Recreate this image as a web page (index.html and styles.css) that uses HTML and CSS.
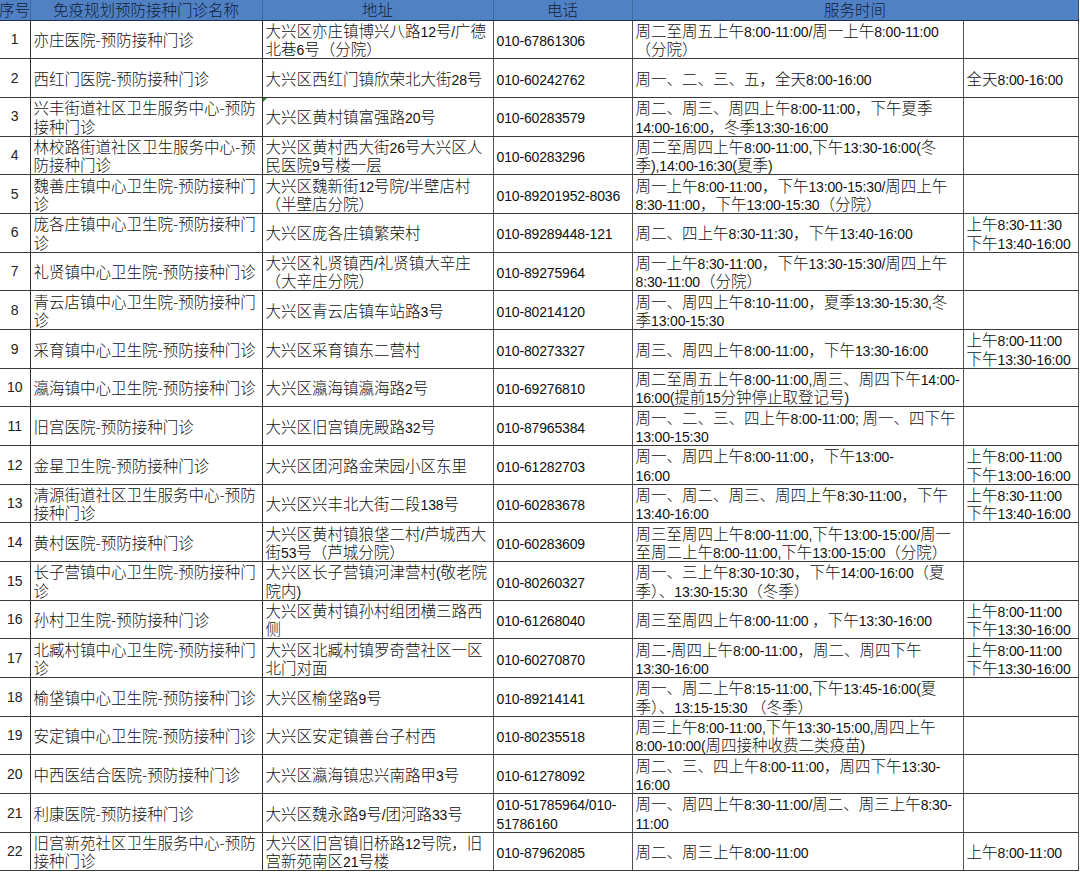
FILE: index.html
```html
<!DOCTYPE html>
<html lang="zh-CN">
<head>
<meta charset="utf-8">
<title>免疫规划预防接种门诊</title>
<link rel="stylesheet" href="styles.css">
</head>
<body>
<table class="sheet">
  <colgroup>
    <col class="c-no"><col class="c-name"><col class="c-addr"><col class="c-tel"><col class="c-time"><col class="c-extra">
  </colgroup>
  <thead>
    <tr class="head">
      <th class="h-no">序号</th>
      <th>免疫规划预防接种门诊名称</th>
      <th>地址</th>
      <th>电话</th>
      <th colspan="2">服务时间</th>
    </tr>
  </thead>
  <tbody>
    <tr><td class="no">1</td><td>亦庄医院-预防接种门诊</td><td>大兴区亦庄镇博兴八路<span class="n">12</span>号<span class="n">/</span>广德<br>北巷<span class="n">6</span>号（分院）</td><td><span class="n">010-67861306</span></td><td>周二至周五上午<span class="n">8:00-11:00/</span>周一上午<span class="n">8:00-11:00</span><br>（分院）</td><td></td></tr>
    <tr><td class="no">2</td><td>西红门医院-预防接种门诊</td><td>大兴区西红门镇欣荣北大街<span class="n">28</span>号</td><td><span class="n">010-60242762</span></td><td>周一、二、三、五，全天<span class="n">8:00-16:00</span></td><td>全天<span class="n">8:00-16:00</span></td></tr>
    <tr><td class="no">3</td><td>兴丰街道社区卫生服务中心-预防<br>接种门诊</td><td class="flag">大兴区黄村镇富强路<span class="n">20</span>号</td><td><span class="n">010-60283579</span></td><td>周二、周三、周四上午<span class="n">8:00-11:00</span>，下午夏季<br><span class="n">14:00-16:00</span>，冬季<span class="n">13:30-16:00</span></td><td></td></tr>
    <tr><td class="no">4</td><td>林校路街道社区卫生服务中心-预<br>防接种门诊</td><td>大兴区黄村西大街<span class="n">26</span>号大兴区人<br>民医院<span class="n">9</span>号楼一层</td><td><span class="n">010-60283296</span></td><td>周二至周四上午<span class="n">8:00-11:00,</span>下午<span class="n">13:30-16:00(</span>冬<br>季<span class="n">),14:00-16:30(</span>夏季<span class="n">)</span></td><td></td></tr>
    <tr><td class="no">5</td><td>魏善庄镇中心卫生院-预防接种门<br>诊</td><td>大兴区魏新街<span class="n">12</span>号院<span class="n">/</span>半壁店村<br>（半壁店分院）</td><td><span class="n">010-89201952-8036</span></td><td>周一上午<span class="n">8:00-11:00</span>，下午<span class="n">13:00-15:30/</span>周四上午<br><span class="n">8:30-11:00</span>，下午<span class="n">13:00-15:30</span>（分院）</td><td></td></tr>
    <tr><td class="no">6</td><td>庞各庄镇中心卫生院-预防接种门<br>诊</td><td>大兴区庞各庄镇繁荣村</td><td><span class="n">010-89289448-121</span></td><td>周二、四上午<span class="n">8:30-11:30</span>，下午<span class="n">13:40-16:00</span></td><td>上午<span class="n">8:30-11:30</span><br>下午<span class="n">13:40-16:00</span></td></tr>
    <tr><td class="no">7</td><td>礼贤镇中心卫生院-预防接种门诊</td><td>大兴区礼贤镇西<span class="n">/</span>礼贤镇大辛庄<br>（大辛庄分院）</td><td><span class="n">010-89275964</span></td><td>周一上午<span class="n">8:30-11:00</span>，下午<span class="n">13:30-15:30/</span>周四上午<br><span class="n">8:30-11:00</span>（分院）</td><td></td></tr>
    <tr><td class="no">8</td><td>青云店镇中心卫生院-预防接种门<br>诊</td><td>大兴区青云店镇车站路<span class="n">3</span>号</td><td><span class="n">010-80214120</span></td><td>周一、周四上午<span class="n">8:10-11:00</span>，夏季<span class="n">13:30-15:30,</span>冬<br>季<span class="n">13:00-15:30</span></td><td></td></tr>
    <tr><td class="no">9</td><td>采育镇中心卫生院-预防接种门诊</td><td>大兴区采育镇东二营村</td><td><span class="n">010-80273327</span></td><td>周三、周四上午<span class="n">8:00-11:00</span>，下午<span class="n">13:30-16:00</span></td><td>上午<span class="n">8:00-11:00</span><br>下午<span class="n">13:30-16:00</span></td></tr>
    <tr><td class="no">10</td><td>瀛海镇中心卫生院-预防接种门诊</td><td>大兴区瀛海镇瀛海路<span class="n">2</span>号</td><td><span class="n">010-69276810</span></td><td>周二至周五上午<span class="n">8:00-11:00,</span>周三、周四下午<span class="n">14:00-</span><br><span class="n">16:00(</span>提前<span class="n">15</span>分钟停止取登记号<span class="n">)</span></td><td></td></tr>
    <tr><td class="no">11</td><td>旧宫医院-预防接种门诊</td><td>大兴区旧宫镇庑殿路<span class="n">32</span>号</td><td><span class="n">010-87965384</span></td><td>周一、二、三、四上午<span class="n">8:00-11:00; </span>周一、四下午<br><span class="n">13:00-15:30</span></td><td></td></tr>
    <tr><td class="no">12</td><td>金星卫生院-预防接种门诊</td><td>大兴区团河路金荣园小区东里</td><td><span class="n">010-61282703</span></td><td>周一、周四上午<span class="n">8:00-11:00</span>，下午<span class="n">13:00-</span><br><span class="n">16:00</span></td><td>上午<span class="n">8:00-11:00</span><br>下午<span class="n">13:00-16:00</span></td></tr>
    <tr><td class="no">13</td><td>清源街道社区卫生服务中心-预防<br>接种门诊</td><td>大兴区兴丰北大街二段<span class="n">138</span>号</td><td><span class="n">010-60283678</span></td><td>周一、周二、周三、周四上午<span class="n">8:30-11:00</span>，下午<br><span class="n">13:40-16:00</span></td><td>上午<span class="n">8:30-11:00</span><br>下午<span class="n">13:40-16:00</span></td></tr>
    <tr><td class="no">14</td><td>黄村医院-预防接种门诊</td><td>大兴区黄村镇狼垡二村<span class="n">/</span>芦城西大<br>街<span class="n">53</span>号（芦城分院）</td><td><span class="n">010-60283609</span></td><td>周三至周四上午<span class="n">8:00-11:00,</span>下午<span class="n">13:00-15:00/</span>周一<br>至周二上午<span class="n">8:00-11:00,</span>下午<span class="n">13:00-15:00</span>（分院）</td><td></td></tr>
    <tr><td class="no">15</td><td>长子营镇中心卫生院-预防接种门<br>诊</td><td>大兴区长子营镇河津营村<span class="n">(</span>敬老院<br>院内<span class="n">)</span></td><td><span class="n">010-80260327</span></td><td>周一、三上午<span class="n">8:30-10:30</span>，下午<span class="n">14:00-16:00</span>（夏<br>季）、<span class="n">13:30-15:30</span>（冬季）</td><td></td></tr>
    <tr><td class="no">16</td><td>孙村卫生院-预防接种门诊</td><td>大兴区黄村镇孙村组团横三路西<br>侧</td><td><span class="n">010-61268040</span></td><td>周三至周四上午<span class="n">8:00-11:00 </span>，下午<span class="n">13:30-16:00</span></td><td>上午<span class="n">8:00-11:00</span><br>下午<span class="n">13:30-16:00</span></td></tr>
    <tr><td class="no">17</td><td>北臧村镇中心卫生院-预防接种门<br>诊</td><td>大兴区北臧村镇罗奇营社区一区<br>北门对面</td><td><span class="n">010-60270870</span></td><td>周二<span class="n">-</span>周四上午<span class="n">8:00-11:00</span>，周二、周四下午<br><span class="n">13:30-16:00</span></td><td>上午<span class="n">8:00-11:00</span><br>下午<span class="n">13:30-16:00</span></td></tr>
    <tr><td class="no">18</td><td>榆垡镇中心卫生院-预防接种门诊</td><td>大兴区榆垡路<span class="n">9</span>号</td><td><span class="n">010-89214141</span></td><td>周一、周二上午<span class="n">8:15-11:00,</span>下午<span class="n">13:45-16:00(</span>夏<br>季）、<span class="n">13:15-15:30 </span>（冬季）</td><td></td></tr>
    <tr><td class="no">19</td><td>安定镇中心卫生院-预防接种门诊</td><td>大兴区安定镇善台子村西</td><td><span class="n">010-80235518</span></td><td>周三上午<span class="n">8:00-11:00,</span>下午<span class="n">13:30-15:00,</span>周四上午<br><span class="n">8:00-10:00(</span>周四接种收费二类疫苗<span class="n">)</span></td><td></td></tr>
    <tr><td class="no">20</td><td>中西医结合医院-预防接种门诊</td><td>大兴区瀛海镇忠兴南路甲<span class="n">3</span>号</td><td><span class="n">010-61278092</span></td><td>周二、三、四上午<span class="n">8:00-11:00</span>，周四下午<span class="n">13:30-</span><br><span class="n">16:00</span></td><td></td></tr>
    <tr><td class="no">21</td><td>利康医院-预防接种门诊</td><td>大兴区魏永路<span class="n">9</span>号<span class="n">/</span>团河路<span class="n">33</span>号</td><td><span class="n">010-51785964/010-</span><br><span class="n">51786160</span></td><td>周一、周四上午<span class="n">8:30-11:00/</span>周二、周三上午<span class="n">8:30-</span><br><span class="n">11:00</span></td><td></td></tr>
    <tr><td class="no">22</td><td>旧宫新苑社区卫生服务中心-预防<br>接种门诊</td><td>大兴区旧宫镇旧桥路<span class="n">12</span>号院，旧<br>宫新苑南区<span class="n">21</span>号楼</td><td><span class="n">010-87962085</span></td><td>周二、周三上午<span class="n">8:00-11:00</span></td><td>上午<span class="n">8:00-11:00</span></td></tr>
  </tbody>
</table>
</body>
</html>
```
FILE: styles.css
```css
html, body {
  margin: 0;
  padding: 0;
  background: #ffffff;
}

body {
  font-family: "Noto Sans CJK SC", "Noto Sans", sans-serif;
  font-size: 15.5px;
  font-weight: 300;
  color: #111111;
}

.sheet {
  border-collapse: collapse;
  table-layout: fixed;
  width: 1078px;
}

.c-no { width: 30px; }
.c-name { width: 232px; }
.c-addr { width: 231px; }
.c-tel { width: 139px; }
.c-time { width: 331px; }
.c-extra { width: 115px; }

.head {
  height: 20px;
}

.head th {
  background: #4f81c4;
  color: #14213a;
  font-weight: 300;
  font-size: 15.5px;
  line-height: 19px;
  padding: 0;
  text-align: center;
  border-right: 1px solid #3e6aa3;
  border-bottom: 1px solid #1d2f4c;
  white-space: nowrap;
  overflow: hidden;
}

.head th:last-child {
  border-right: 1px solid #3a4a60;
}

.head .h-no {
  text-align: left;
  text-indent: -1px;
}

tbody tr {
  height: 38.68px;
}

td {
  padding: 0 0 0 3px;
  line-height: 18.4px;
  vertical-align: middle;
  white-space: nowrap;
  overflow: hidden;
  border-bottom: 1px solid #3a3a3a;
  border-right: 1px solid #555555;
}

.n {
  font-family: "Liberation Sans", Arial, sans-serif;
  font-weight: 400;
  font-size: 14px;
  line-height: 1;
  letter-spacing: -0.15px;
}

td.no {
  font-family: "Liberation Sans", Arial, sans-serif;
  font-weight: 400;
  font-size: 14px;
  text-align: center;
  padding: 0;
  color: #222222;
}

td:nth-child(1), td:nth-child(2) {
  border-right-color: #2e2e2e;
}

td.flag {
  position: relative;
}

td.flag::before {
  content: "";
  position: absolute;
  left: 0;
  top: 0;
  width: 0;
  height: 0;
  border-top: 4px solid #2f8a2f;
  border-right: 4px solid transparent;
}
```
